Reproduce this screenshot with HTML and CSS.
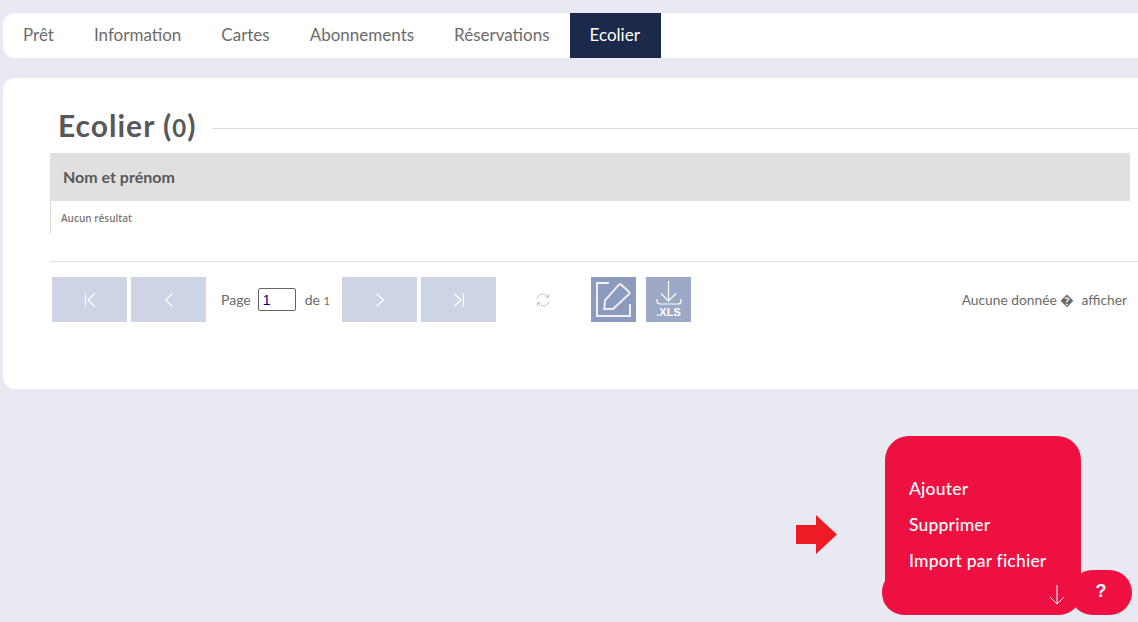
FILE: index.html
```html
<!DOCTYPE html>
<html lang="fr">
<head>
<meta charset="utf-8">
<title>Ecolier</title>
<link rel="stylesheet" href="styles.css">
</head>
<body>
<nav class="tabs">
  <a class="tab">Prêt</a>
  <a class="tab">Information</a>
  <a class="tab">Cartes</a>
  <a class="tab">Abonnements</a>
  <a class="tab">Réservations</a>
  <a class="tab tab-active">Ecolier</a>
</nav>
<main class="panel">
  <div class="title-row">
    <h1 class="title">Ecolier (<span class="oldnum">0</span>)</h1>
    <div class="title-line"></div>
  </div>
  <div class="table-head">Nom et prénom</div>
  <div class="table-empty">Aucun résultat</div>
  <div class="pager">
    <button class="pg-btn"><svg width="14" height="14" viewBox="0 0 14 14"><path d="M2.500 .5v13M12 .5 5 7l7 6.500" fill="none" stroke="#fff" stroke-width="1.200"/></svg></button>
    <button class="pg-btn"><svg width="14" height="14" viewBox="0 0 14 14"><path d="M10.500 .5 3.500 7l7 6.500" fill="none" stroke="#fff" stroke-width="1.200"/></svg></button>
    <span class="pg-label pg-page">Page</span>
    <input class="pg-input" type="text" value="1">
    <span class="pg-label pg-of">de <span class="oldnum">1</span></span>
    <button class="pg-btn"><svg width="14" height="14" viewBox="0 0 14 14"><path d="m3.500 .5 7 6.500-7 6.500" fill="none" stroke="#fff" stroke-width="1.200"/></svg></button>
    <button class="pg-btn"><svg width="14" height="14" viewBox="0 0 14 14"><path d="M11.500 .5v13M2 .5 9 7l-7 6.500" fill="none" stroke="#fff" stroke-width="1.200"/></svg></button>
    <svg class="refresh" width="16" height="16" viewBox="0 0 16 16" fill="none" stroke="#bcc4da" stroke-width="1"><path d="M2 6.500A6 6 0 0 1 13 5M14 9.500A6 6 0 0 1 3 11"/><path d="M13.500 2v3.300h-3.300M2.500 14v-3.300h3.300"/></svg>
    <button class="act-btn act-edit"><svg width="37" height="37" viewBox="0 0 37 37" fill="none" stroke="#eef0f6" stroke-width="2"><path d="M14 2H2v33h33V23"/><path d="M10 19.300 24 3.700c.7-.7 1.500-.7 2.200 0l8 7.200c.7.700.7 1.400 0 2.100L18.300 27.700l-9 .6z"/></svg></button>
    <button class="act-btn act-xls"><svg width="26" height="24" viewBox="0 0 26 24" fill="none" stroke="#fff" stroke-width="1.200"><path d="M12.500 0v20M5 12.500l7.500 7.500 7.500-7.500M1 18v2c0 2 1 3 3 3h18c2 0 3-1 3-3v-2"/></svg><span class="xls-text">.XLS</span></button>
    <span class="pg-label pg-info">Aucune donnée �&nbsp; afficher</span>
  </div>
</main>
<svg class="pointer" width="41" height="39" viewBox="0 0 41 39"><path d="M0 10h20V0l21 19.500L20 39V29H0z" fill="#ed1c24"/></svg>
<aside class="fab">
  <div class="fab-menu">
    <a class="fab-item">Ajouter</a>
    <a class="fab-item">Supprimer</a>
    <a class="fab-item">Import par fichier</a>
  </div>
  <div class="fab-bar"><svg width="16" height="20" viewBox="0 0 16 20"><path d="M8 0v19M1 12l7 7 7-7" fill="none" stroke="#fff" stroke-width="1"/></svg></div>
  <div class="fab-help">?</div>
</aside>
</body>
</html>
```
FILE: styles.css
```css
* { box-sizing: border-box; }
html, body { height: 100%; }
body {
  margin: 0;
  padding: 13px 0 0 3px;
  background: #e8e9f2;
  font-family: "Lato", "Liberation Sans", sans-serif;
  color: #5a5a5a;
  overflow: hidden;
}
.tabs {
  display: flex;
  height: 45px;
  background: #fff;
  border-radius: 12px 0 0 12px;
}
.tab {
  padding: 0 20px;
  line-height: 44px;
  font-size: 17px;
  color: #6b6b6b;
}
.tab-active {
  padding-right: 21px;
  background: #1b2a4a;
  color: #fff;
}
.panel {
  margin-top: 20px;
  height: 311px;
  padding: 0 0 0 47px;
  background: #fff;
  border-radius: 12px 0 0 12px;
}
.title-row {
  display: flex;
  align-items: center;
  height: 75px;
  padding: 21px 0 0 8px;
}
.title {
  margin: 0;
  font-size: 30px;
  font-weight: 700;
  line-height: 34px;
  letter-spacing: 1px;
  color: #58585a;
}
.title-line {
  flex: 1;
  height: 1px;
  margin: 4px 0 0 16px;
  background: #ddd;
}
.oldnum { font-size: .8em; }
.table-head {
  width: 1080px;
  height: 48px;
  padding-left: 13px;
  background: #e0e0e0;
  font-size: 16px;
  font-weight: 700;
  line-height: 48px;
  color: #58585a;
}
.table-empty {
  height: 33px;
  padding: 11px 0 0 10px;
  border-left: 1px solid #ddd;
  font-family: "Open Sans", sans-serif;
  font-size: 10px;
  font-weight: 600;
  line-height: 13px;
  color: #7d7773;
}
.pager {
  display: flex;
  align-items: center;
  height: 61px;
  margin-top: 27px;
  padding: 15px 11px 0 2px;
  border-top: 1px solid #ddd;
}
.pg-btn, .act-btn {
  display: flex;
  align-items: center;
  justify-content: center;
  height: 45px;
  border: 0;
  padding: 0;
}
.pg-btn {
  width: 75px;
  margin-right: 4px;
  background: #cdd4e4;
}
.act-btn { width: 45px; flex-direction: column; }
.act-edit { background: #8c9abd; margin-left: 40px; }
.act-xls { background: #9ba8c6; margin-left: 10px; }
.xls-text {
  font-family: "Liberation Sans", sans-serif;
  font-size: 11px;
  font-weight: 700;
  line-height: 11px;
  color: #fff;
  margin-top: 2px;
}
.pg-label { font-size: 14px; color: #6b6b6b; }
.pg-page { margin-left: 11px; }
.pg-input {
  width: 38px;
  height: 23px;
  margin-left: 7px;
  padding: 0 4px;
  border: 1px solid #666;
  border-radius: 2px;
  font-family: "Liberation Sans", sans-serif;
  font-size: 14px;
  color: #00008b;
}
.pg-of { margin: 0 12px 0 9px; }
.refresh { margin-left: 35px; }
.pg-info { margin-left: auto; white-space: nowrap; font-size: 13.800px; }
.pointer { position: fixed; left: 796px; top: 515px; }
.fab { position: fixed; left: 882px; top: 436px; width: 250px; height: 179px; }
.fab-menu {
  position: absolute;
  left: 3px;
  top: 0;
  width: 196px;
  height: 160px;
  padding-top: 35px;
  background: #ed1040;
  border-radius: 24px 24px 0 0;
}
.fab-item {
  display: block;
  height: 36px;
  padding-left: 24px;
  font-size: 17.500px;
  font-weight: 500;
  line-height: 36px;
  letter-spacing: .2px;
  color: #fff;
}
.fab-bar {
  position: absolute;
  left: 0;
  top: 134px;
  width: 199px;
  height: 45px;
  padding: 15px 0 0 167px;
  background: #ed1040;
  border-radius: 22px;
}
.fab-help {
  position: absolute;
  left: 188px;
  top: 134px;
  width: 62px;
  height: 45px;
  background: #ed1040;
  border-radius: 23px;
  color: #fff;
  font-family: "Liberation Sans", sans-serif;
  font-size: 18px;
  font-weight: 700;
  line-height: 43px;
  text-align: center;
}
```
